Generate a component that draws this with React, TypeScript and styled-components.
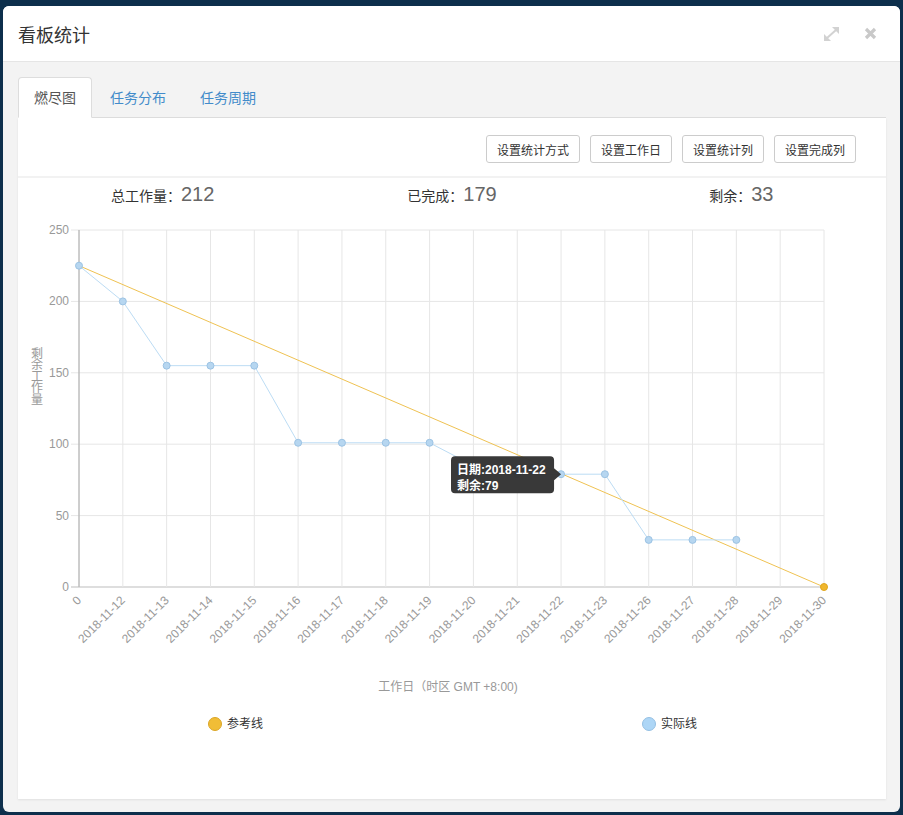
import React from "react";
import styled, { createGlobalStyle } from "styled-components";

const X0 = 79;
const X1 = 824;
const Y0 = 587;
const YTOP = 230;
const YMAX = 250;

const xAt = (i: number) => X0 + (i * (X1 - X0)) / (categories.length - 1);
const yAt = (v: number) => Y0 - (v * (Y0 - YTOP)) / YMAX;

const App = () => {
  return (
    <>
      <GlobalStyle />
      <Modal>
        <Header>
          <Title>看板统计</Title>
          <HeaderIcons>
            <IconButton aria-label="expand">
              <svg width="17" height="16" viewBox="0 0 17 16">
                <line x1="4" y1="12" x2="13" y2="4" stroke="#d2d2d2" strokeWidth="2" />
                <polygon points="9,1 16,1 16,8" fill="#d2d2d2" />
                <polygon points="1,8 1,15 8,15" fill="#d2d2d2" />
              </svg>
            </IconButton>
            <IconButton aria-label="close">
              <svg width="13" height="13" viewBox="0 0 13 13">
                <path d="M2 2 L11 11 M11 2 L2 11" stroke="#c9c9c9" strokeWidth="3.2" />
              </svg>
            </IconButton>
          </HeaderIcons>
        </Header>
        <Body>
          <Tabs>
            {tabs.map((t, i) => (
              <Tab key={t} $active={i === 0}>
                {t}
              </Tab>
            ))}
          </Tabs>
          <Panel>
            <Toolbar>
              {buttons.map((b) => (
                <ToolButton key={b}>{b}</ToolButton>
              ))}
            </Toolbar>
            <Stats>
              {stats.map((s) => (
                <Stat key={s.label}>
                  <StatLabel>{s.label}：</StatLabel>
                  <StatValue>{s.value}</StatValue>
                </Stat>
              ))}
            </Stats>
            <BurndownChart />
          </Panel>
        </Body>
      </Modal>
    </>
  );
};

const BurndownChart = () => {
  const ticks = [0, 50, 100, 150, 200, 250];
  const actualPts = actual.map((v, i) => `${xAt(i)},${yAt(v)}`).join(" ");
  const tipX = xAt(11);
  const tipY = yAt(79);

  return (
    <ChartSvg width="868" height="560" viewBox="0 0 868 560">
      <g transform="translate(-18 -210)">
        {ticks.map((t) => (
          <g key={t}>
            <line
              x1={71}
              x2={X1}
              y1={yAt(t)}
              y2={yAt(t)}
              stroke={t === 0 ? "#bdbdbd" : "#e6e6e6"}
              strokeWidth="1"
            />
            <TickText x={69} y={yAt(t) + 4} textAnchor="end">
              {t}
            </TickText>
          </g>
        ))}
        {categories.map((c, i) => (
          <line
            key={c}
            x1={xAt(i)}
            x2={xAt(i)}
            y1={YTOP}
            y2={Y0}
            stroke="#e6e6e6"
            strokeWidth="1"
          />
        ))}
        <line x1={X0} x2={X0} y1={YTOP} y2={Y0} stroke="#a8a8a8" strokeWidth="1" />

        {categories.map((c, i) => {
          const ax = xAt(i) + 3;
          const ay = 601;
          return (
            <TickText
              key={c}
              x={ax}
              y={ay}
              textAnchor="end"
              transform={`rotate(-45 ${ax} ${ay})`}
            >
              {c}
            </TickText>
          );
        })}

        <VerticalTitle x={37} y={347}>
          剩余工作量
        </VerticalTitle>

        <line
          x1={xAt(0)}
          y1={yAt(225)}
          x2={X1}
          y2={Y0}
          stroke="#efc252"
          strokeWidth="1"
        />
        <circle cx={X1} cy={Y0} r="3.5" fill="#f0b62c" stroke="#e0a61e" />

        <polyline points={actualPts} fill="none" stroke="#bcdcf4" strokeWidth="1" />
        {actual.map((v, i) => (
          <circle
            key={i}
            cx={xAt(i)}
            cy={yAt(v)}
            r="3.5"
            fill="#b6d6f0"
            stroke="#9cc3e4"
            strokeWidth="1"
          />
        ))}

        <path
          d={`M455 ${tipY - 18} H${tipX - 11} a4 4 0 0 1 4 4 V${tipY - 6} L${tipX} ${tipY} L${tipX - 7} ${tipY + 6} V${tipY + 15} a4 4 0 0 1 -4 4 H455 a4 4 0 0 1 -4 -4 V${tipY - 14} a4 4 0 0 1 4 -4 Z`}
          fill="#313131"
          fillOpacity="0.96"
        />
        <TipText x={457} y={tipY}>
          日期:2018-11-22
        </TipText>
        <TipText x={457} y={tipY + 16}>
          剩余:79
        </TipText>

        <TickText x={448} y={691} textAnchor="middle">
          工作日（时区 GMT +8:00)
        </TickText>

        <circle cx={215} cy={724} r="6.5" fill="#f1bd36" stroke="#dba627" />
        <LegendText x={227} y={728}>
          参考线
        </LegendText>
        <circle cx={649} cy={724} r="6.5" fill="#add6f6" stroke="#95c0e3" />
        <LegendText x={661} y={728}>
          实际线
        </LegendText>
      </g>
    </ChartSvg>
  );
};

const GlobalStyle = createGlobalStyle`
  * {
    box-sizing: border-box;
  }
  html,
  body {
    margin: 0;
    background: #0d2f4c;
  }
  body {
    font-family: "Liberation Sans", "Noto Sans CJK SC", sans-serif;
  }
`;

const Modal = styled.div`
  margin: 6px 3px 3px 3px;
  width: 897px;
  border-radius: 6px;
  overflow: hidden;
  background: #f3f3f3;
`;

const Header = styled.div`
  display: flex;
  align-items: center;
  height: 56px;
  padding: 0 23px 0 15px;
  background: #fff;
  border-bottom: 1px solid #e5e5e5;
`;

const Title = styled.h4`
  flex: 1;
  margin: 0;
  font-size: 18px;
  font-weight: normal;
  color: #333;
`;

const HeaderIcons = styled.div`
  display: flex;
  align-items: center;
  gap: 24px;
`;

const IconButton = styled.span`
  display: flex;
  cursor: pointer;
`;

const Body = styled.div`
  padding: 15px 14px 13px 16px;
`;

const Tabs = styled.div`
  display: flex;
  gap: 2px;
  height: 41px;
  border-bottom: 1px solid #ddd;
  margin-left: -1px;
`;

const Tab = styled.div<{ $active?: boolean }>`
  height: 41px;
  padding: 0 15px;
  line-height: 40px;
  font-size: 14px;
  color: ${(p) => (p.$active ? "#555" : "#428bca")};
  background: ${(p) => (p.$active ? "#fff" : "transparent")};
  border: 1px solid ${(p) => (p.$active ? "#ddd" : "transparent")};
  border-bottom-color: transparent;
  border-radius: 4px 4px 0 0;
  cursor: pointer;
`;

const Panel = styled.div`
  background: #fff;
  margin-left: -1px;
  padding-bottom: 29px;
  box-shadow: 0 1px 2px rgba(0, 0, 0, 0.08);
`;

const Toolbar = styled.div`
  display: flex;
  justify-content: flex-end;
  gap: 10px;
  padding: 17px 30px 13px;
  border-bottom: 2px solid #f2f2f2;
`;

const ToolButton = styled.button`
  height: 28px;
  padding: 0 10px;
  font-family: "Liberation Sans", "Noto Sans CJK SC", sans-serif;
  font-size: 12px;
  color: #333;
  background: #fff;
  border: 1px solid #ccc;
  border-radius: 3px;
`;

const Stats = styled.div`
  display: grid;
  grid-template-columns: repeat(3, 1fr);
  align-items: center;
  height: 32px;
`;

const Stat = styled.div`
  text-align: center;
`;

const StatLabel = styled.span`
  font-size: 14px;
  color: #333;
`;

const StatValue = styled.span`
  font-size: 20px;
  color: #666;
`;

const ChartSvg = styled.svg`
  display: block;
`;

const TickText = styled.text`
  font-family: "Liberation Sans", "Noto Sans CJK SC", sans-serif;
  font-size: 12px;
  fill: #999;
`;

const VerticalTitle = styled.text`
  font-family: "Noto Sans CJK SC", sans-serif;
  font-size: 12px;
  fill: #999;
  writing-mode: vertical-rl;
  text-orientation: upright;
  letter-spacing: -0.4px;
`;

const TipText = styled.text`
  font-family: "Liberation Sans", "Noto Sans CJK SC", sans-serif;
  font-size: 12px;
  font-weight: bold;
  fill: #fff;
`;

const LegendText = styled.text`
  font-family: "Liberation Sans", "Noto Sans CJK SC", sans-serif;
  font-size: 12px;
  fill: #333;
`;

export default App;

const tabs = ["燃尽图", "任务分布", "任务周期"];

const buttons = ["设置统计方式", "设置工作日", "设置统计列", "设置完成列"];

const stats = [
  { label: "总工作量", value: 212 },
  { label: "已完成", value: 179 },
  { label: "剩余", value: 33 },
];

const categories = [
  "0",
  "2018-11-12",
  "2018-11-13",
  "2018-11-14",
  "2018-11-15",
  "2018-11-16",
  "2018-11-17",
  "2018-11-18",
  "2018-11-19",
  "2018-11-20",
  "2018-11-21",
  "2018-11-22",
  "2018-11-23",
  "2018-11-26",
  "2018-11-27",
  "2018-11-28",
  "2018-11-29",
  "2018-11-30",
];

const actual = [225, 200, 155, 155, 155, 101, 101, 101, 101, 85, 79, 79, 79, 33, 33, 33];
